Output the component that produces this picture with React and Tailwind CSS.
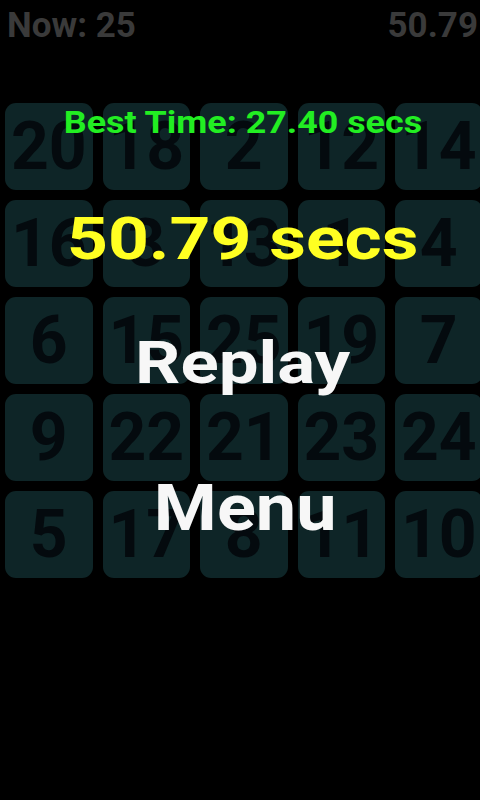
import React from 'react';

const tiles = [
  20, 18, 2, 12, 14,
  16, 3, 13, 1, 4,
  6, 15, 25, 19, 7,
  9, 22, 21, 23, 24,
  5, 17, 8, 11, 10,
];

const font = { fontFamily: 'Roboto, "Liberation Sans", sans-serif' };

const App = () => {
  return (
    <div className="relative w-[480px] h-[800px] bg-black overflow-hidden" style={font}>
      <div className="flex justify-between pl-[7px] pr-[2px] pt-[8px] text-[35px] leading-none font-bold text-[#3a3a3a]">
        <span>Now: 25</span>
        <span>50.79</span>
      </div>

      <div className="mt-[60px] pl-[5px] grid grid-cols-[repeat(5,87.5px)] auto-rows-[87px] gap-[10px]">
        {tiles.map((n) => (
          <div
            key={n}
            className="rounded-[11px] bg-[#0e2527] flex items-center justify-center text-[66px] font-bold leading-none text-[#040a0e]"
          >
            {n}
          </div>
        ))}
      </div>

      <div className="absolute inset-x-0 top-0 pl-[5px] flex flex-col items-center font-bold leading-none">
        <div className="mt-[106px] text-[32px] text-[#22ee22] scale-x-[1.12]">Best Time: 27.40 secs</div>
        <div className="mt-[71px] text-[60px] text-[#ffff22] scale-x-[1.19]">50.79 secs</div>
        <button className="mt-[64px] text-[59px] text-[#f7f7f7] scale-x-[1.2]">Replay</button>
        <button className="mt-[85px] ml-[5px] text-[64px] text-[#f7f7f7] scale-x-[1.125]">Menu</button>
      </div>
    </div>
  );
};

export default App;
